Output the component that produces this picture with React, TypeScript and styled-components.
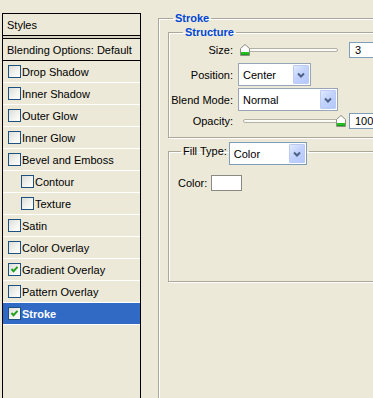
import React from "react";
import styled, { createGlobalStyle } from "styled-components";

const GlobalStyle = createGlobalStyle`
  html, body {
    margin: 0;
    padding: 0;
    background: #ece9d8;
    overflow: hidden;
  }
  body {
    font-family: Tahoma, "Liberation Sans", Arial, sans-serif;
    font-size: 11px;
    color: #000;
  }
`;

const Dialog = styled.div`
  display: flex;
  align-items: flex-start;
  width: 373px;
  height: 398px;
  overflow: hidden;
  padding: 13px 0 0 2px;
  box-sizing: border-box;
`;

/* ---------- left style list ---------- */

const StyleList = styled.div`
  width: 139px;
  height: 400px;
  flex-shrink: 0;
  box-sizing: border-box;
  border: 1px solid #000;
  display: flex;
  flex-direction: column;
`;

const ListHead = styled.div<{ $top?: boolean }>`
  height: 21px;
  display: flex;
  align-items: center;
  padding-left: 4px;
  border-bottom: 1px solid #000;
  ${(p) => (p.$top ? "" : "border-top: 1px solid #000;")}
`;

const HeadGap = styled.div`
  height: 2px;
  background: #d6d2c2;
`;

const StyleRow = styled.div<{ $indent?: boolean; $active?: boolean }>`
  height: 21px;
  display: flex;
  align-items: center;
  gap: 1px;
  padding-left: ${(p) => (p.$indent ? 18 : 5)}px;
  border-bottom: 1px solid #fff;
  background: ${(p) => (p.$active ? "#316ac5" : "transparent")};
  color: ${(p) => (p.$active ? "#fff" : "#000")};
  font-weight: ${(p) => (p.$active ? "bold" : "normal")};
`;

const Box = styled.span`
  width: 13px;
  height: 13px;
  box-sizing: border-box;
  border: 1px solid #1c5180;
  background: linear-gradient(135deg, #dcdcd7 0%, #f4f4f1 60%, #fff 100%);
  display: inline-flex;
  align-items: center;
  justify-content: center;
  flex-shrink: 0;
`;

function Check({ on }: { on?: boolean }) {
  return (
    <Box>
      {on && (
        <svg width="9" height="9" viewBox="0 0 9 9">
          <path d="M1.5 4 L3.5 6.2 L7.5 1.8" fill="none" stroke="#21a121" strokeWidth="2" />
        </svg>
      )}
    </Box>
  );
}

/* ---------- right panel ---------- */

const Panel = styled.div`
  margin-left: 17px;
  margin-top: -1px;
  width: 260px;
  flex-shrink: 0;
`;

const Group = styled.fieldset<{ $pl?: number }>`
  margin: 0;
  padding: 0 0 0 ${(p) => p.$pl ?? 0}px;
  border: 1px solid #aca899;
  box-shadow: inset 1px 1px 0 #fff, 1px 1px 0 #fff;
  min-width: 0;
`;

const Title = styled.legend<{ $ml: number }>`
  margin-left: ${(p) => p.$ml}px;
  padding: 0 2px;
  line-height: 13px;
  font-weight: bold;
  color: #0046d5;
`;

const FillLegend = styled.legend`
  margin-left: 12px;
  padding: 0 2px;
  height: 18px;
  display: flex;
  align-items: flex-start;
  gap: 2px;
  line-height: 18px;
`;

const StrokeBody = styled.div`
  padding-top: 1px;
  height: 400px;
`;

const Fields = styled.div`
  padding: 2px 0 8px;
  display: flex;
  flex-direction: column;
`;

const FieldRow = styled.div<{ $h: number; $mt?: number }>`
  height: ${(p) => p.$h}px;
  margin-top: ${(p) => p.$mt ?? 0}px;
  display: flex;
  align-items: center;
`;

const Label = styled.span`
  width: 64px;
  margin-right: 5px;
  text-align: right;
  white-space: nowrap;
`;

const NumBox = styled.span`
  margin-left: 7px;
  width: 40px;
  height: 16px;
  box-sizing: border-box;
  border: 1px solid #7f9db9;
  background: #fff;
  padding-left: 5px;
  display: flex;
  align-items: center;
`;

const Slider = styled.div`
  position: relative;
  width: 104px;
  height: 12px;
  display: flex;
  align-items: center;
`;

const Groove = styled.div`
  flex: 1;
  margin: 0 4px 0 5px;
  height: 2px;
  border: 1px solid #b3b1a6;
  border-radius: 2px;
  background: #fbfbf8;
`;

const Thumb = styled.svg`
  position: absolute;
  top: 0;
`;

function Track({ value }: { value: number }) {
  const left = (value / 100) * 99 - 1;
  return (
    <Slider>
      <Groove />
      <Thumb width="10" height="12" viewBox="0 0 10 12" style={{ left }}>
        <path d="M0.5 11.5 V4.5 L5 0.5 L9.5 4.5 V11.5 Z" fill="#fff" stroke="#8c8e80" />
        <rect x="1" y="8" width="8" height="3" fill="#21c121" />
        <rect x="1" y="10" width="8" height="1" fill="#18a018" />
      </Thumb>
    </Slider>
  );
}

const Combo = styled.div<{ $w: number; $focus?: boolean }>`
  width: ${(p) => p.$w}px;
  height: 23px;
  box-sizing: border-box;
  border: 1px solid ${(p) => (p.$focus ? "#7f9db9" : "#97a5b8")};
  background: #fff;
  padding: 1px;
  display: flex;
  align-items: stretch;
  line-height: normal;
`;

const ComboText = styled.span`
  flex: 1;
  padding-left: 3px;
  display: flex;
  align-items: center;
`;

const ComboBtn = styled.span`
  width: 16px;
  box-sizing: border-box;
  border: 1px solid #bccbf2;
  border-radius: 1px;
  background: linear-gradient(135deg, #e2eafe 0%, #c3d3fd 45%, #b4c8fb 100%);
  display: flex;
  align-items: center;
  justify-content: center;
`;

function Select({ w, value, focus }: { w: number; value: string; focus?: boolean }) {
  return (
    <Combo $w={w} $focus={focus}>
      <ComboText>{value}</ComboText>
      <ComboBtn>
        <svg width="8" height="6" viewBox="0 0 8 6">
          <path d="M1 1.5 L4 4.5 L7 1.5" fill="none" stroke="#4d6185" strokeWidth="2" />
        </svg>
      </ComboBtn>
    </Combo>
  );
}

const FillBody = styled.div`
  height: 106px;
  padding: 15px 0 0 9px;
  display: flex;
  align-items: flex-start;
  gap: 4px;
`;

const ColorLabel = styled.span`
  line-height: 16px;
`;

const Swatch = styled.span`
  width: 31px;
  height: 16px;
  box-sizing: border-box;
  border: 1px solid #8a8a84;
  background: #fff;
`;

const FillGroup = styled(Group)`
  margin-top: 4px;
`;

const styles = [
  { name: "Drop Shadow" },
  { name: "Inner Shadow" },
  { name: "Outer Glow" },
  { name: "Inner Glow" },
  { name: "Bevel and Emboss" },
  { name: "Contour", indent: true },
  { name: "Texture", indent: true },
  { name: "Satin" },
  { name: "Color Overlay" },
  { name: "Gradient Overlay", on: true },
  { name: "Pattern Overlay" },
  { name: "Stroke", on: true, active: true },
];

export default function App() {
  return (
    <>
      <GlobalStyle />
      <Dialog>
        <StyleList>
          <ListHead $top>Styles</ListHead>
          <HeadGap />
          <ListHead>Blending Options: Default</ListHead>
          {styles.map((s) => (
            <StyleRow key={s.name} $indent={s.indent} $active={s.active}>
              <Check on={s.on} />
              {s.name}
            </StyleRow>
          ))}
        </StyleList>

        <Panel>
          <Group $pl={9}>
            <Title $ml={5}>Stroke</Title>
            <StrokeBody>
              <Group>
                <Title $ml={14}>Structure</Title>
                <Fields>
                  <FieldRow $h={17}>
                    <Label>Size:</Label>
                    <Track value={3} />
                    <NumBox>3</NumBox>
                  </FieldRow>
                  <FieldRow $h={23} $mt={5}>
                    <Label>Position:</Label>
                    <Select w={73} value="Center" />
                  </FieldRow>
                  <FieldRow $h={23} $mt={2}>
                    <Label>Blend Mode:</Label>
                    <Select w={100} value="Normal" />
                  </FieldRow>
                  <FieldRow $h={16} $mt={2}>
                    <Label>Opacity:</Label>
                    <Track value={100} />
                    <NumBox>100</NumBox>
                  </FieldRow>
                </Fields>
              </Group>

              <FillGroup>
                <FillLegend>
                  <span>Fill Type:</span>
                  <Select w={78} value="Color" focus />
                </FillLegend>
                <FillBody>
                  <ColorLabel>Color:</ColorLabel>
                  <Swatch />
                </FillBody>
              </FillGroup>
            </StrokeBody>
          </Group>
        </Panel>
      </Dialog>
    </>
  );
}
